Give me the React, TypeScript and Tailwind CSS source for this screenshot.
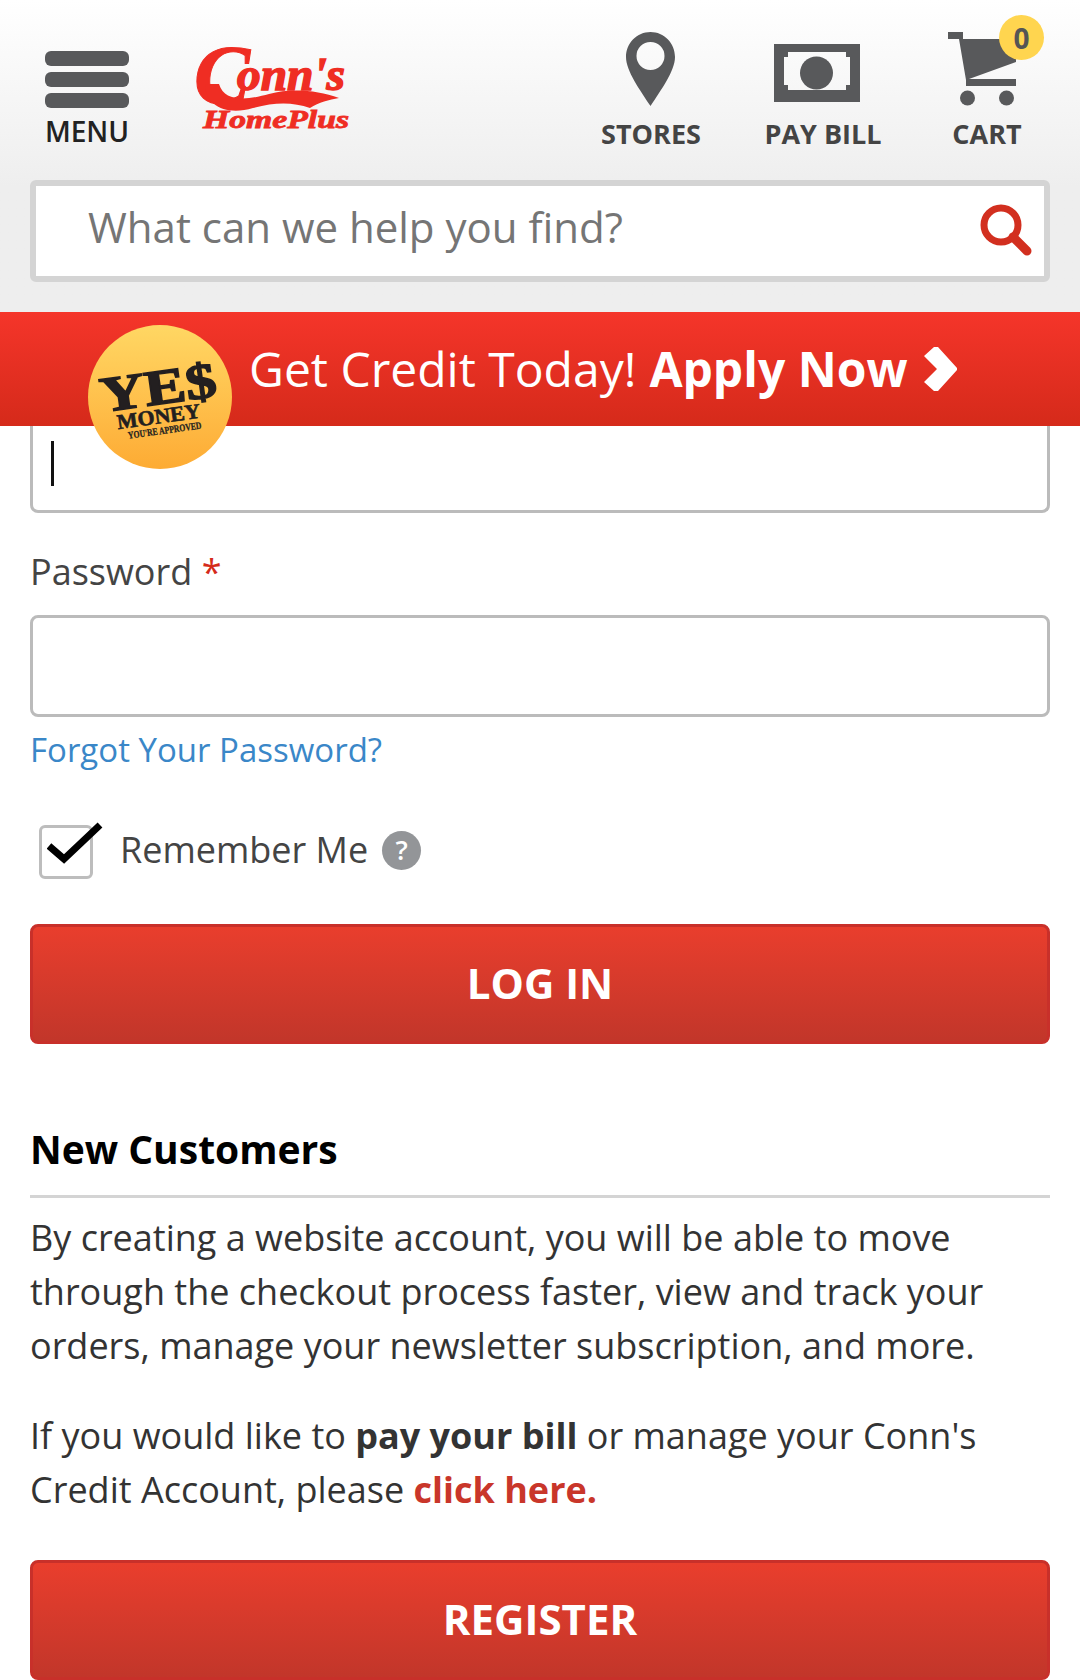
import React from "react";

const ConnsLogo = () => (
  <svg width="170" height="114" viewBox="-8 -16 170 114" className="shrink-0 mt-[-18px] ml-[-8px]">
    <text x="-3" y="60" fill="#ef2d23" stroke="#ef2d23" strokeWidth="1" className="font-['Liberation_Serif'] italic font-bold text-[84px]">C</text>
    <text x="40" y="46" fill="#ef2d23" stroke="#ef2d23" strokeWidth="1.500" textLength="108" lengthAdjust="spacingAndGlyphs" className="font-['Liberation_Serif'] italic font-bold text-[46px]">onn's</text>
    <path d="M8 40C8 62 30 72 56 64C78 58 96 58 113 64C122 58 132 56 142 54C120 46 94 44 72 50C54 55 28 60 22 40Z" fill="#ef2d23" />
    <text x="6" y="84" fill="#ef2d23" stroke="#ef2d23" strokeWidth="0.800" textLength="146" lengthAdjust="spacingAndGlyphs" className="font-['Liberation_Serif'] italic font-bold text-[25px]">HomePlus</text>
  </svg>
);

const PinIcon = () => (
  <svg width="49" height="74" viewBox="0 0 49 74" className="mr-[2px]">
    <path fillRule="evenodd" d="M24.5 0C11 0 0 11 0 25C0 39 14 58 24.5 74C35 58 49 39 49 25C49 11 38 0 24.5 0ZM24.5 10A14 14 0 1 1 24.5 38A14 14 0 1 1 24.5 10Z" fill="#58595b" />
  </svg>
);

const BillIcon = () => (
  <svg width="86" height="58" viewBox="0 0 86 58" className="mr-[12px] mt-[8px]">
    <path fillRule="evenodd" d="M0 0H86V58H0ZM14 8V13H10V41H14V46H72V41H76V13H72V8Z" fill="#58595b" />
    <circle cx="42.5" cy="29" r="16.5" fill="#58595b" />
  </svg>
);

const CartIcon = () => (
  <svg width="69" height="74" viewBox="0 0 69 74" className="mr-[10px] shrink-0">
    <path d="M0 0H15V7H10L11 7H68V30L21 47H68V54H18V48L11 7H0Z" fill="#58595b" />
    <circle cx="19.500" cy="66" r="7.500" fill="#58595b" />
    <circle cx="58.500" cy="66" r="7.500" fill="#58595b" />
  </svg>
);

const SearchIcon = () => (
  <svg width="52" height="52" viewBox="0 0 52 52" className="shrink-0 mb-[2px]">
    <circle cx="21" cy="21" r="17" fill="none" stroke="#d22f1f" strokeWidth="7" />
    <path d="M33 33L47 47" stroke="#d22f1f" strokeWidth="9" strokeLinecap="round" />
  </svg>
);

const YesCoin = () => (
  <div className="absolute left-[88px] top-[13px] w-[144px] h-[144px] rounded-full bg-gradient-to-b from-[#ffd763] to-[#fdab33]">
    <svg width="144" height="144" viewBox="0 0 144 144">
      <g transform="rotate(-8 72 72)" fill="#231f20" stroke="#231f20" className="font-['Liberation_Serif'] font-bold">
        <text x="13" y="79" strokeWidth="1.500" textLength="117" lengthAdjust="spacingAndGlyphs" className="text-[50px]">YE$</text>
        <text x="26" y="98" strokeWidth="0.600" textLength="84" lengthAdjust="spacingAndGlyphs" className="text-[21px]">MONEY</text>
        <text x="35" y="109" strokeWidth="0.300" textLength="74" lengthAdjust="spacingAndGlyphs" className="text-[10px]">YOU'RE APPROVED</text>
      </g>
    </svg>
  </div>
);

const NavItem = ({ label, icon, className }: { label: string; icon: React.ReactNode; className: string }) => (
  <div className={`flex flex-col items-center ${className}`}>
    <div className="h-[100px] flex items-center">{icon}</div>
    <span className="-mt-[3px] text-[27px] leading-[36px] font-bold text-[#444] whitespace-nowrap">{label}</span>
  </div>
);

const RedButton = ({ label }: { label: string }) => (
  <button className="w-full h-[120px] pb-[4px] rounded-[8px] border-[3px] border-[#c8302a] bg-gradient-to-b from-[#e93e2d] to-[#c2362a] text-white text-[42px] font-bold">
    {label}
  </button>
);

export default function App() {
  return (
    <div className="w-[1080px] h-[1680px] overflow-hidden bg-white font-['Open_Sans',sans-serif] text-[#333]">
      <header className="h-[312px] bg-gradient-to-b from-white to-[#eeeeee] to-60% px-[30px]">
        <div className="h-[180px] flex items-start relative">
          <div className="ml-[15px] mt-[51px] w-[84px] flex flex-col items-center">
            <div className="w-full flex flex-col gap-[6px]">
              <div className="h-[15px] rounded-[6px] bg-[#58595b]" />
              <div className="h-[15px] rounded-[6px] bg-[#58595b]" />
              <div className="h-[15px] rounded-[6px] bg-[#58595b]" />
            </div>
            <span className="mt-[5px] text-[28px] leading-[36px] font-semibold text-[#222]">MENU</span>
          </div>
          <div className="ml-[68px] mt-[46px]">
            <ConnsLogo />
          </div>
          <div className="ml-auto mr-[29px] mt-[19px] flex items-start">
            <NavItem label="STORES" icon={<PinIcon />} className="w-[100px]" />
            <NavItem label="PAY BILL" icon={<BillIcon />} className="w-[116px] ml-[64px]" />
            <div className="relative ml-[72px]">
              <NavItem label="CART" icon={<CartIcon />} className="w-[68px]" />
              <div className="absolute left-[46px] top-[-4px] w-[45px] h-[45px] rounded-full bg-[#ffd54f] flex items-center justify-center text-[28px] font-bold text-[#555]">
                0
              </div>
            </div>
          </div>
        </div>
        <div className="h-[102px] border-[6px] border-[#d4d4d4] rounded-[6px] bg-white flex items-center pl-[52px] pr-[12px]">
          <span className="flex-1 mb-[10px] text-[42px] text-[#757575]">What can we help you find?</span>
          <SearchIcon />
        </div>
      </header>

      <div className="relative z-10 h-[114px] bg-gradient-to-b from-[#f5352a] to-[#d52a1a] flex items-center pl-[249px] text-white text-[48px]">
        <span>Get Credit Today!</span>
        <span className="ml-[13px] font-bold">Apply Now</span>
        <svg width="33" height="44" viewBox="0 0 33 44" className="ml-[16px]">
          <path d="M10 0H14L33 21V23L14 44H10L0 35L13 22L0 9Z" fill="#fff" />
        </svg>
        <YesCoin />
      </div>

      <main className="px-[30px]">
        <div className="h-[87px] border-[3px] border-t-0 border-[#bbbbbb] rounded-b-[8px] pl-[18px] pt-[15px]">
          <div className="w-[3px] h-[45px] bg-[#111]" />
        </div>

        <label className="block mt-[32px] text-[36px] leading-[54px] text-[#444]">
          Password <span className="text-[#d52a1a]">*</span>
        </label>
        <div className="mt-[16px] h-[102px] border-[3px] border-[#bbbbbb] rounded-[8px]" />
        <a className="block mt-[6px] text-[33px] leading-[54px] text-[#3a87c8]">Forgot Your Password?</a>

        <div className="mt-[46px] flex items-center h-[57px] relative">
          <div className="ml-[9px] w-[54px] h-[54px] border-[3px] border-[#bdbdbd] rounded-[6px] shrink-0" />
          <svg width="58" height="46" viewBox="0 0 58 46" className="absolute left-[17px] top-[-1px]">
            <path d="M2 24L17 37L53 3" fill="none" stroke="#000" strokeWidth="7" />
          </svg>
          <span className="ml-[27px] mb-[4px] text-[36px] text-[#444]">Remember Me</span>
          <span className="ml-[14px] mb-[2px] w-[39px] h-[39px] rounded-full bg-[#939598] text-white text-[27px] font-semibold flex items-center justify-center">?</span>
        </div>

        <div className="mt-[44px]">
          <RedButton label="LOG IN" />
        </div>

        <h2 className="mt-[78px] text-[39px] leading-[54px] font-bold text-black">New Customers</h2>
        <hr className="mt-[19px] border-t-[3px] border-[#d4d4d4]" />
        <p className="mt-[13px] text-[36px] leading-[54px]">
          By creating a website account, you will be able to move through the checkout process faster, view and track your orders, manage your newsletter subscription, and more.
        </p>
        <p className="mt-[36px] text-[36px] leading-[54px]">
          If you would like to <b>pay your bill</b> or manage your Conn's Credit Account, please <b className="text-[#c9362a]">click here.</b>
        </p>
        <div className="mt-[43px]">
          <RedButton label="REGISTER" />
        </div>
      </main>
    </div>
  );
}
